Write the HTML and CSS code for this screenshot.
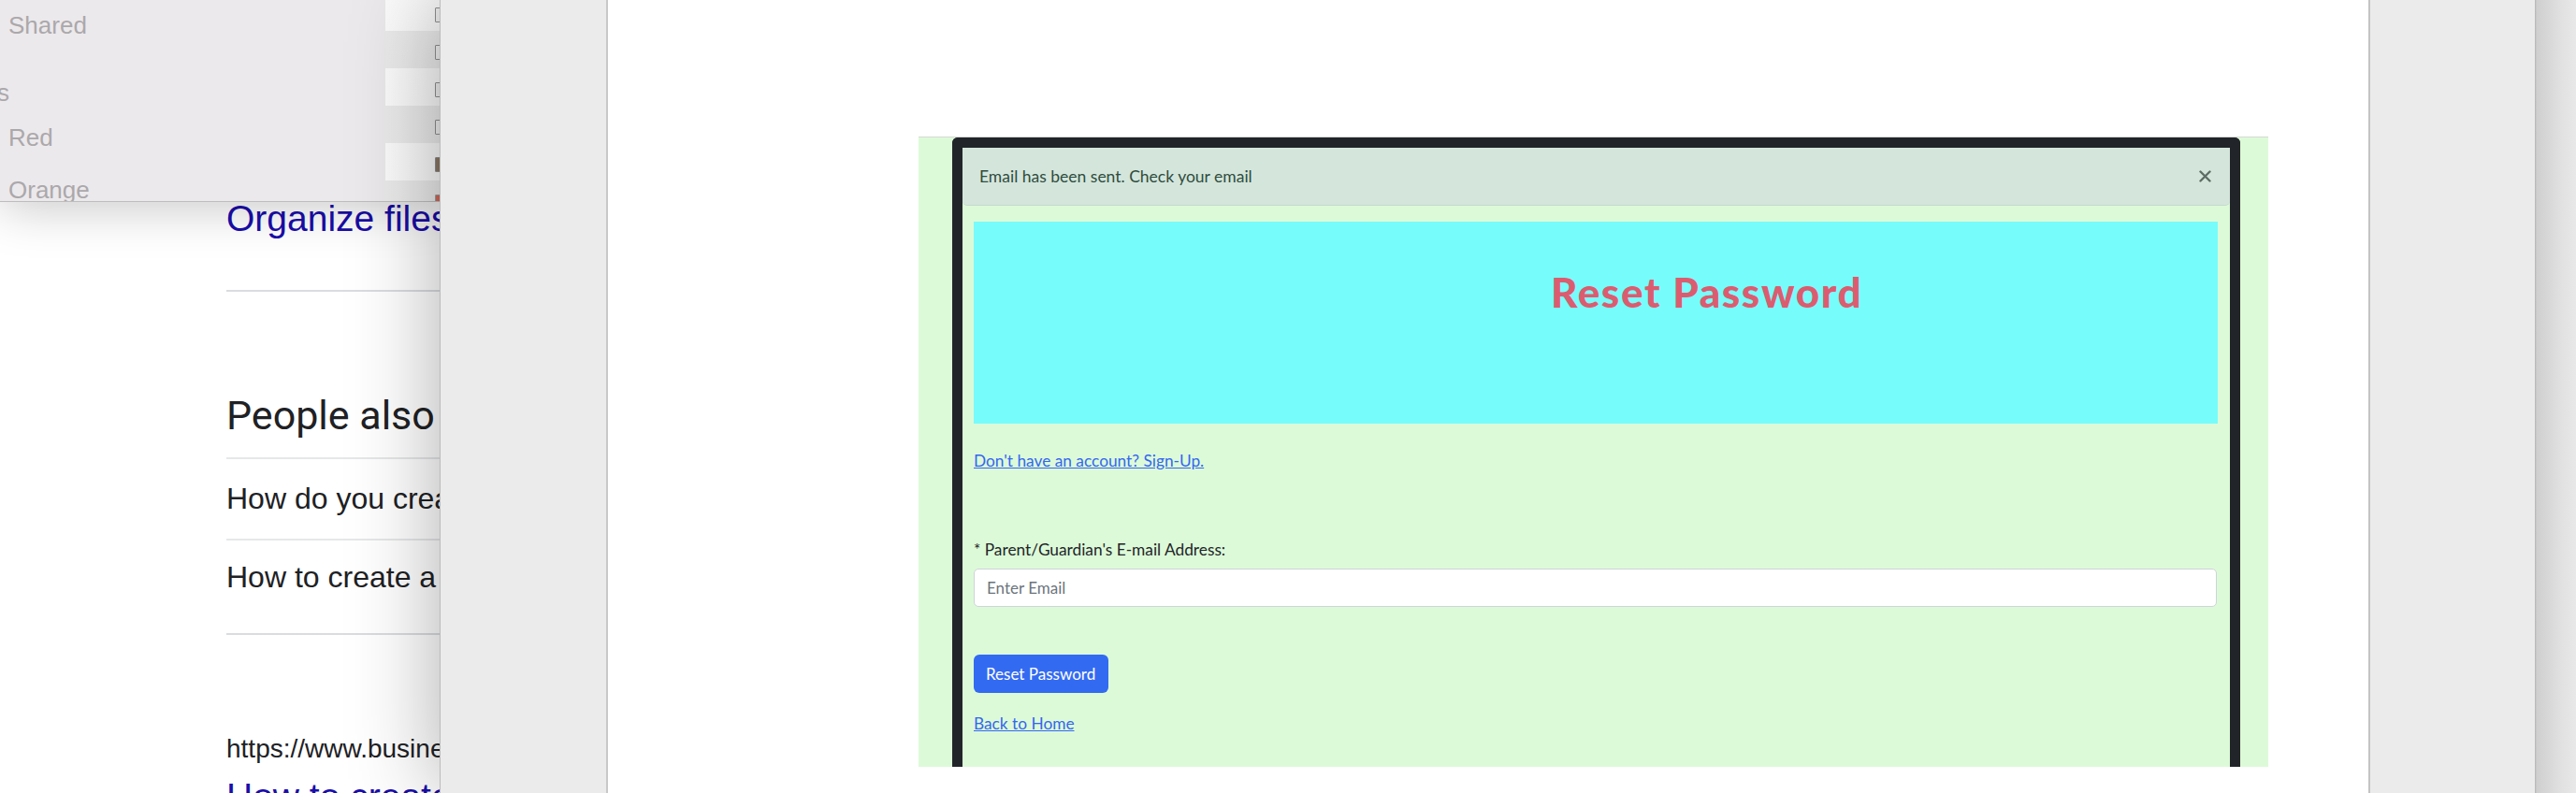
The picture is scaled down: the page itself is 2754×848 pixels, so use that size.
FILE: index.html
```html
<!DOCTYPE html>
<html lang="en">
<head>
<meta charset="utf-8">
<title>Reset Password</title>
<link rel="stylesheet" href="styles.css">
</head>
<body>
<div class="desktop">
  <div class="behind">
    <div class="finder">
      <div class="finder-side">
        <div class="fs-item fs-shared">Shared</div>
        <div class="fs-head">Tags</div>
        <div class="fs-item fs-red">Red</div>
        <div class="fs-item fs-orange">Orange</div>
      </div>
      <div class="finder-list">
        <div class="frow light"><span class="ficon"></span></div>
        <div class="frow dark"><span class="ficon"></span></div>
        <div class="frow light"><span class="ficon"></span></div>
        <div class="frow dark"><span class="ficon"></span></div>
        <div class="frow light"><span class="ficon brown"></span></div>
        <div class="frow dark"><span class="ficon red"></span></div>
      </div>
    </div>
    <div class="serp">
      <div class="serp-title">Organize files and folders in Google Drive</div>
      <div class="serp-rule"></div>
      <div class="serp-paa">People also ask</div>
      <div class="serp-rule thin"></div>
      <div class="serp-q q1">How do you create a folder in Google Drive?</div>
      <div class="serp-rule thin"></div>
      <div class="serp-q q2">How to create a shared folder?</div>
      <div class="serp-rule r4"></div>
      <div class="serp-url">https://www.businessinsider.com</div>
      <div class="serp-title t2">How to create a folder in Google Drive</div>
    </div>
  </div>

  <div class="viewer">
    <div class="v-side"></div>
    <div class="page">
      <div class="shot">
        <div class="card">
          <div class="alert">
            <span class="alert-text">Email has been sent. Check your email</span>
            <svg class="alert-close" width="13" height="13" viewBox="0 0 13 13" aria-label="close">
              <path d="M1.5 1.5 L11.5 11.5 M11.5 1.5 L1.5 11.5" stroke="#5e6d65" stroke-width="2.4" stroke-linecap="round" fill="none"/>
            </svg>
          </div>
          <div class="hero">
            <h1 class="hero-title">Reset Password</h1>
          </div>
          <div class="form">
            <a class="link signup" href="#">Don't have an account? Sign-Up.</a>
            <label class="label" for="email">* Parent/Guardian's E-mail Address:</label>
            <input class="input" id="email" type="email" placeholder="Enter Email">
            <button class="btn" type="button">Reset Password</button>
            <a class="link home" href="#">Back to Home</a>
          </div>
        </div>
      </div>
    </div>
    <div class="v-right"></div>
    <div class="v-edge"></div>
  </div>
</div>
</body>
</html>
```
FILE: styles.css
```css
* { box-sizing: border-box; margin: 0; padding: 0; }
html, body { width: 2754px; height: 848px; overflow: hidden; background: #fff; }

.desktop {
  display: grid;
  grid-template-columns: 470px 2284px;
  height: 848px;
}

/* ---------- background windows (left) ---------- */
.behind {
  position: relative;
  overflow: hidden;
  display: flex;
  flex-direction: column;
  background: #fff;
}

.finder {
  flex: none;
  height: 216px;
  display: grid;
  grid-template-columns: 412px 58px;
  border-bottom: 1px solid #bdbdbd;
  box-shadow: 0 6px 50px rgba(0, 0, 0, 0.22);
  position: relative;
  z-index: 1;
  overflow: hidden;
}

.finder-side {
  background: #ece9ec;
  font-family: "Liberation Sans", Arial, sans-serif;
  font-size: 26px;
  line-height: 26px;
  color: #aba8ab;
  padding-left: 9px;
  overflow: hidden;
  white-space: nowrap;
}
.fs-shared { margin-top: 14px; }
.fs-head { margin-top: 46px; margin-left: -54px; }
.fs-red { margin-top: 22px; }
.fs-orange { margin-top: 30px; }

.finder-list {
  overflow: hidden;
  position: relative;
}
.frow {
  height: 40px;
  padding-top: 15px;
  padding-left: 53px;
}
.frow:first-child { margin-top: -7px; }
.frow.light { background: linear-gradient(to right, #fbfbfb, #f8f8f8); }
.frow.dark { background: linear-gradient(to right, #ebebeb, #e9e9e9); }
.ficon {
  display: block;
  width: 10px;
  height: 16px;
  border: 1px solid #8e8e8e;
  background: #eeeeee;
  border-radius: 1px;
}
.ficon.brown { background: #8a7664; border-color: #8e8e8e; }
.ficon.red { background: #d0685a; border-color: #9e9e9e; }

.serp {
  padding-left: 242px;
  white-space: nowrap;
  font-family: "Liberation Sans", Arial, sans-serif;
}
.serp-title {
  font-size: 39px;
  line-height: 39px;
  color: #1a0dab;
  margin-top: -2px;
}
.serp-title.t2 { margin-top: 17px; }
.serp-rule {
  height: 2px;
  background: #dadce0;
  margin-top: 57px;
}
.serp-rule.thin { background: #e6e7e9; margin-top: 23px; }
.serp-q.q1 + .serp-rule.thin { margin-top: 27px; }
.serp-rule.r4 { margin-top: 44px; }
.serp-paa {
  font-family: Roboto, "Noto Sans", sans-serif;
  font-size: 43px;
  line-height: 43px;
  color: #202124;
  margin-top: 111px;
}
.serp-q {
  font-size: 32px;
  line-height: 32px;
  color: #202124;
}
.serp-q.q1 { margin-top: 26px; }
.serp-q.q2 { margin-top: 23px; }
.serp-url {
  font-size: 28px;
  line-height: 28px;
  color: #202124;
  margin-top: 108px;
}

/* ---------- front window ---------- */
.viewer {
  display: flex;
  position: relative;
  z-index: 2;
  box-shadow: 0 0 90px rgba(0, 0, 0, 0.32);
}
.v-side {
  width: 180px;
  flex: none;
  background: #ebebeb;
  border-left: 1px solid #bcbcbc;
  border-right: 2px solid #c8c8c8;
}
.page {
  width: 1882px;
  flex: none;
  background: #fff;
  padding: 146px 0 0 332px;
}
.v-right {
  width: 178px;
  flex: none;
  background: #ebebeb;
  border-left: 2px solid #c4c4c4;
}
.v-edge {
  width: 44px;
  flex: none;
  background: linear-gradient(to right, #b4b4b4 0, #cfcfcf 2px, #e2e2e2 30px, #e8e8e8 100%);
}

/* ---------- screenshot of the web page ---------- */
.shot {
  width: 1443px;
  height: 674px;
  background: #ddfad8;
  border-top: 1px solid #d6d9d6;
  padding-left: 36px;
  overflow: hidden;
  font-family: Lato, "Open Sans", sans-serif;
}
.card {
  width: 1377px;
  height: 720px;
  border: 11px solid #212529;
  border-bottom: none;
  border-radius: 6px 6px 0 0;
  background: #ddfad8;
}
.alert {
  height: 62px;
  display: flex;
  align-items: center;
  justify-content: space-between;
  padding: 0 20px 0 18px;
  background: #d4e6dc;
  border-bottom: 1px solid #c4d8cd;
  border-radius: 0 0 5px 5px;
  color: #304c3e;
  font-size: 17.5px;
  line-height: 18px;
}
.alert-close { display: block; }

.hero {
  margin: 17px 13px 0 12px;
  height: 216px;
  background: #77fcfc;
  padding: 53px 0 0 617px;
}
.hero-title {
  font-family: Lato, "Open Sans", sans-serif;
  font-weight: 900;
  font-size: 44px;
  line-height: 44px;
  letter-spacing: 1.6px;
  color: #dc5c6f;
}

.form {
  padding-left: 12px;
  display: flex;
  flex-direction: column;
  align-items: flex-start;
  font-size: 17.3px;
  line-height: 17px;
}
.link {
  color: #3467f0;
  text-decoration: underline;
}
.signup { margin-top: 31px; }
.label {
  margin-top: 78px;
  color: #212529;
}
.input {
  margin-top: 12px;
  width: 1329px;
  height: 41px;
  border: 1px solid #cfd4da;
  border-radius: 5px;
  background: #fff;
  padding: 0 13px;
  font-family: Lato, "Open Sans", sans-serif;
  font-size: 17px;
  color: #212529;
  outline: none;
}
.input::placeholder { color: #6c757d; }
.btn {
  margin-top: 51px;
  width: 144px;
  height: 41px;
  border: none;
  border-radius: 6px;
  background: #336af2;
  color: #fff;
  font-family: Lato, "Open Sans", sans-serif;
  font-size: 17px;
  padding: 0 13px;
  text-align: left;
}
.home { margin-top: 24px; }
```
